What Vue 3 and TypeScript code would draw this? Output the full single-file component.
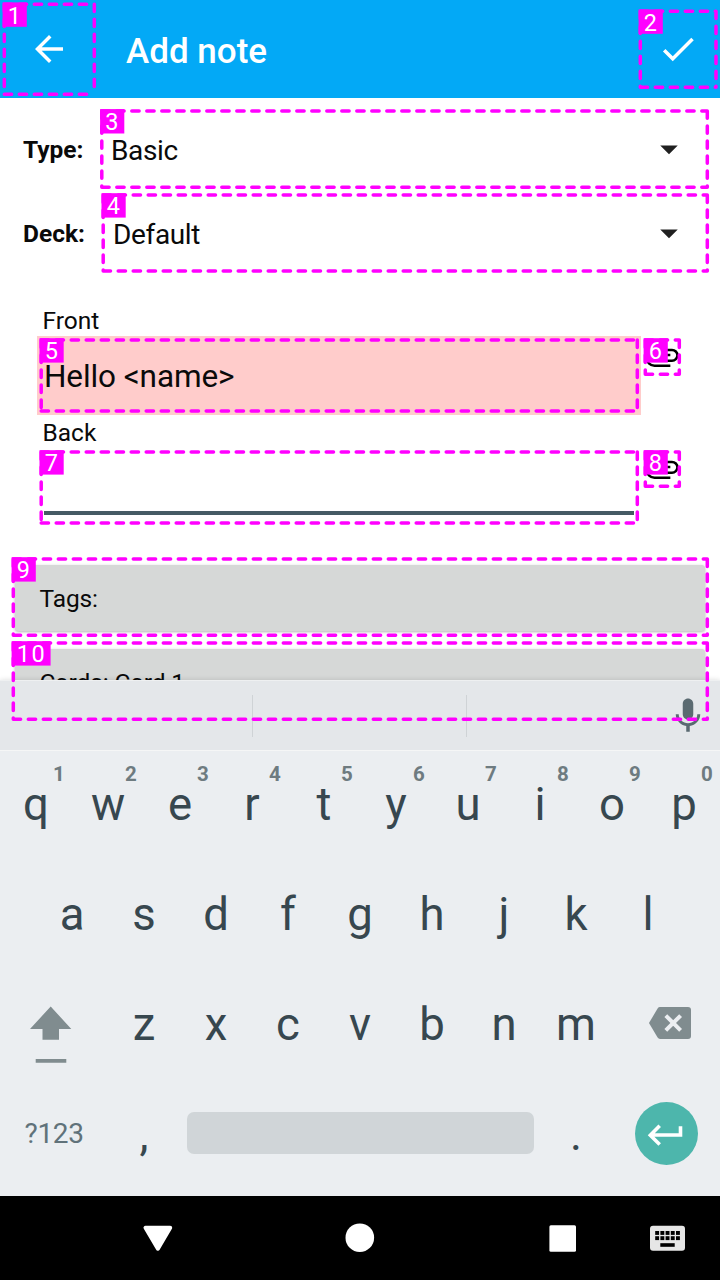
<script setup lang="ts">
interface Mark { n: number; x1: number; y1: number; x2: number; y2: number }
interface Key { label: string; hint: string }

const spinners = [
  { label: 'Type:', value: 'Basic', cls: 'type' },
  { label: 'Deck:', value: 'Default', cls: 'deck' },
]
const fields = [
  { name: 'Front', value: 'Hello <name>', duplicate: true },
  { name: 'Back', value: '', duplicate: false },
]
const topKeys: Key[] = 'qwertyuiop'.split('').map((label, i) => ({ label, hint: String((i + 1) % 10) }))
const homeKeys = 'asdfghjkl'.split('')
const lowKeys = 'zxcvbnm'.split('')
const dots = [0, 1, 2, 3, 4]

const marks: Mark[] = [
  { n: 1, x1: 4.3, y1: 4.3, x2: 94.3, y2: 94.3 },
  { n: 2, x1: 640.3, y1: 11.3, x2: 716, y2: 87.3 },
  { n: 3, x1: 101.8, y1: 111, x2: 707.3, y2: 187.3 },
  { n: 4, x1: 103.2, y1: 195.1, x2: 707.3, y2: 271.1 },
  { n: 5, x1: 41.2, y1: 340.1, x2: 637.3, y2: 411 },
  { n: 6, x1: 645.3, y1: 340.1, x2: 679.3, y2: 374.3 },
  { n: 7, x1: 41.2, y1: 452.1, x2: 637.3, y2: 523 },
  { n: 8, x1: 645.3, y1: 452.1, x2: 679.3, y2: 486.3 },
  { n: 9, x1: 13.3, y1: 559.1, x2: 707.3, y2: 635.2 },
  { n: 10, x1: 13.3, y1: 643.1, x2: 707.3, y2: 719.2 },
]
const outline = (m: Mark): string =>
  `M${m.x1} ${m.y1}H${m.x2}M${m.x1} ${m.y1}V${m.y2}M${m.x2} ${m.y1}V${m.y2}M${m.x1} ${m.y2}H${m.x2}`
</script>

<template>
  <div class="screen">
    <header class="bar">
      <svg class="icon back" viewBox="0 0 24 24"><path d="M20 11H7.83l5.59-5.59L12 4l-8 8 8 8 1.41-1.41L7.83 13H20v-2z" /></svg>
      <h1>Add note</h1>
      <svg class="icon check" viewBox="0 0 24 24"><path d="M9 16.17L4.83 12l-1.42 1.41L9 19 21 7l-1.41-1.41z" /></svg>
    </header>

    <main class="content">
      <div v-for="s in spinners" :key="s.label" class="spinner" :class="s.cls">
        <span class="spinner-label">{{ s.label }}</span>
        <span class="spinner-value">{{ s.value }}</span>
        <svg class="caret" viewBox="0 0 24 24"><path d="M7 10l5 5 5-5z" /></svg>
      </div>

      <section class="fields">
        <div v-for="f in fields" :key="f.name" class="field">
          <div class="field-name">{{ f.name }}</div>
          <div class="field-row">
            <div class="edit" :class="{ duplicate: f.duplicate }">{{ f.value }}</div>
            <svg class="clip" viewBox="0 0 24 24"><path d="M7.5 18A5.5 5.5 0 0 1 2 12.5 5.5 5.5 0 0 1 7.5 7H18a4 4 0 0 1 4 4 4 4 0 0 1-4 4H9.500A2.500 2.500 0 0 1 7 12.500 2.500 2.500 0 0 1 9.500 10H17v1.500H9.500a1 1 0 0 0-1 1 1 1 0 0 0 1 1H18a2.500 2.500 0 0 0 2.500-2.500A2.500 2.500 0 0 0 18 8.500H7.500a4 4 0 0 0-4 4 4 4 0 0 0 4 4H17V18z" /></svg>
          </div>
        </div>
      </section>

      <div class="button">Tags:</div>
      <div class="button">Cards: Card 1</div>
    </main>

    <section class="keyboard">
      <div class="suggest">
        <span></span><span></span>
        <div class="voice">
          <svg viewBox="0 0 24 24"><path d="M12 14c1.66 0 3-1.34 3-3V5c0-1.66-1.34-3-3-3S9 3.34 9 5v6c0 1.66 1.34 3 3 3zM17.3 11c0 3-2.54 5.1-5.3 5.1S6.7 14 6.700 11H5c0 3.410 2.720 6.230 6 6.720V21h2v-3.280c3.280-.48 6-3.300 6-6.720h-1.700z" /></svg>
        </div>
      </div>
      <div class="keys">
        <div v-for="k in topKeys" :key="k.label" class="key">{{ k.label }}<span class="hint">{{ k.hint }}</span></div>
      </div>
      <div class="keys home">
        <div v-for="k in homeKeys" :key="k" class="key">{{ k }}</div>
      </div>
      <div class="keys">
        <div class="wide">
          <svg class="shift" viewBox="0 0 42 57"><path d="M20.7 .5L41.3 23H29V33.7H12.5V23H0zM5.7 53H36.3v3.7H5.7z" /></svg>
        </div>
        <div v-for="k in lowKeys" :key="k" class="key">{{ k }}</div>
        <div class="wide">
          <svg class="delete" viewBox="0 0 42 32"><path class="fill" d="M11 0H39a3 3 0 0 1 3 3V29a3 3 0 0 1-3 3H11Q9.5 32 8.6 30.6L0 16 8.6 1.4Q9.5 0 11 0z" /><path class="cross" d="M16.8 8.6L31.6 23.4M31.6 8.6L16.8 23.4" /></svg>
        </div>
      </div>
      <div class="keys last">
        <div class="wide symbols">?123</div>
        <div class="key">,</div>
        <div class="space-key"><div class="space"></div></div>
        <div class="key">.</div>
        <div class="wide">
          <svg class="enter" viewBox="0 0 63 63"><circle cx="31.5" cy="31.5" r="31.5" /><path d="M45.5 24.2V33H15.500M24.700 23.800L15.300 33.200L24.700 42.600" /></svg>
        </div>
      </div>
    </section>

    <nav class="nav">
      <svg viewBox="0 0 720 84">
        <path class="tri" d="M145.5 31.8H170.2L157.9 52.7z" />
        <circle cx="359.8" cy="41.7" r="14.3" />
        <rect x="549.4" y="29.2" width="26.6" height="26.6" rx="1.5" />
        <g class="ime">
          <rect x="650" y="29.7" width="35" height="25" rx="3" />
          <g class="ime-keys">
            <template v-for="d in dots" :key="d">
              <rect :x="655.2 + d * 5.2" y="35" width="3.9" height="3.9" />
              <rect :x="655.2 + d * 5.2" y="40.2" width="3.9" height="3.9" />
            </template>
            <rect x="660.3" y="47.2" width="14.4" height="3.6" />
          </g>
        </g>
      </svg>
    </nav>

    <svg class="marks" viewBox="0 0 720 1280">
      <g v-for="m in marks" :key="m.n">
        <path class="outline" :d="outline(m)" />
        <rect class="tag" :x="m.x1 - 1.7" :y="m.y1 - 1.9" :width="m.n > 9 ? 39 : 24.2" height="24.4" />
        <text :x="m.x1 + 3.5" :y="m.y1 + 19.2">{{ m.n }}</text>
      </g>
    </svg>
  </div>
</template>

<style>
body { margin: 0; overflow: hidden; }
</style>

<style scoped>
.screen {
  position: relative;
  width: 720px;
  height: 1280px;
  display: flex;
  flex-direction: column;
  overflow: hidden;
  background: #fff;
  color: #0a0a0a;
  font-family: Roboto, "Liberation Sans", sans-serif;
}
svg { display: block; flex: none; }
.bar {
  flex: none;
  height: 98px;
  box-sizing: border-box;
  display: flex;
  align-items: center;
  padding: 0 21px 0 28px;
  background: #03a9f6;
  color: #fff;
}
.icon { width: 42px; height: 42px; fill: #fff; }
h1 {
  margin: 5px auto 0 56px;
  font-size: 35px;
  line-height: 44px;
  font-weight: 500;
}
.content {
  flex: none;
  height: 582px;
  box-sizing: border-box;
  padding-top: 10px;
  overflow: hidden;
}
.spinner {
  height: 84px;
  display: flex;
  align-items: center;
  padding: 0 30px 0 23px;
}
.spinner-label { font-size: 24.5px; font-weight: 700; width: 88px; margin-top: -2px; }
.deck .spinner-label { width: 90px; }
.spinner-value { flex: 1; font-size: 28px; letter-spacing: -.35px; }
.caret { width: 42px; height: 42px; margin-top: -3px; fill: #202020; }
.fields { padding: 28px 0 0 37px; height: 261px; }
.field { height: 112px; }
.field-name { height: 32px; line-height: 34px; padding-left: 5.5px; font-size: 24.5px; }
.field-row { display: flex; }
.edit {
  width: 604px;
  height: 79px;
  box-sizing: border-box;
  padding-left: 7px;
  font-size: 31.5px;
  line-height: 81px;
  letter-spacing: -.1px;
  white-space: pre;
}
.duplicate { background: #ffcccb; }
.edit:not(.duplicate)::after {
  content: "";
  display: block;
  width: 590px;
  height: 4px;
  margin-top: 63px;
  background: #455a64;
}
.clip { width: 40px; height: 40px; margin: 1px 0 0 1px; fill: #000; }
.button {
  height: 66px;
  width: 690px;
  box-sizing: border-box;
  margin: 0 0 18px 15px;
  padding-left: 24.5px;
  border-radius: 3.5px;
  background: #d6d8d7;
  box-shadow: 0 1px 3px rgba(0, 0, 0, .3);
  font-size: 24.5px;
  line-height: 67px;
  letter-spacing: -.1px;
}
.keyboard {
  flex: none;
  height: 516px;
  background: #ebeef1;
  box-shadow: 0 0 5px rgba(0, 0, 0, .14);
  z-index: 1;
}
.suggest {
  height: 71px;
  margin-bottom: -1px;
  box-sizing: border-box;
  display: flex;
  align-items: center;
  padding-top: 1px;
  background: #e4e7ea;
  border-top: 1px solid #eef0f1;
  border-bottom: 1px solid #f5f6f6;
}
.suggest span { width: 252px; height: 42px; border-right: 1.5px solid #cfd3d6; box-sizing: content-box; }
.suggest span + span { width: 213px; }
.voice { margin-left: auto; margin-right: 11px; }
.voice svg { width: 42px; height: 42px; fill: #5a6a71; }
.keys { display: flex; height: 110px; }
.home { padding: 0 36px; }
.key {
  position: relative;
  width: 72px;
  text-align: center;
  font-size: 45.5px;
  line-height: 109px;
  color: #37474f;
}
.hint {
  position: absolute;
  right: 0;
  top: 11px;
  width: 26px;
  font-size: 20.5px;
  line-height: 27px;
  font-weight: 700;
  color: #6e7b80;
}
.wide { width: 108px; display: flex; align-items: flex-start; }
.shift { width: 42px; height: 57px; margin: 36px 0 0 30px; fill: #808c8f; }
.delete { width: 42px; height: 32px; margin: 37px 0 0 36.7px; }
.delete .fill { fill: #808c8f; }
.cross { stroke: #ebeef1; stroke-width: 4; }
.symbols {
  box-sizing: border-box;
  padding-left: 24.5px;
  font-size: 28px;
  line-height: 108px;
  letter-spacing: -.3px;
  color: #60727a;
}
.space-key { width: 360px; padding: 32px 6.500px; box-sizing: border-box; }
.space { height: 42px; border-radius: 7px; background: #d0d5d8; }
.enter { width: 63px; height: 63px; margin: 21.7px 0 0 22.8px; }
.enter circle { fill: #4db6ac; }
.enter path { fill: none; stroke: #fff; stroke-width: 3.6; }
.nav { flex: none; height: 84px; background: #000; z-index: 1; }
.nav svg { width: 720px; height: 84px; fill: #fff; }
.tri { stroke: #fff; stroke-width: 4; stroke-linejoin: round; }
.ime { fill: #e6e6e6; }
.ime-keys { fill: #000; }
.marks { position: absolute; inset: 0; width: 720px; height: 1280px; z-index: 2; }
.outline {
  fill: none;
  stroke: #f0f;
  stroke-width: 3.5;
  stroke-linecap: round;
  stroke-dasharray: 7.3 7.7;
}
.tag { fill: #f0f; }
.marks text { font-size: 23.5px; letter-spacing: 1.5px; fill: #fff; }
</style>
